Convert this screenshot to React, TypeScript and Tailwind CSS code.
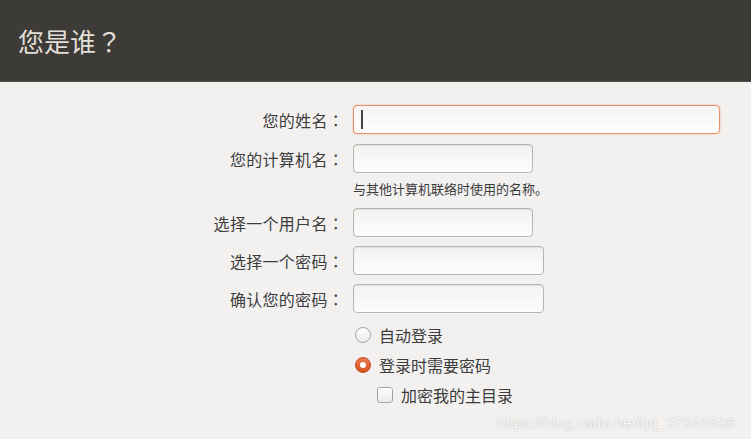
const font = "font-['Noto_Sans_CJK_SC','Noto_Sans',sans-serif]"

// full-width colon drawn centered, as in the reference
function Colon() {
  return <span className="font-['Noto_Sans_CJK_TC',sans-serif]">：</span>
}

function Field({ label, width, focused }: { label: string; width: string; focused?: boolean }) {
  return (
    <div className="flex items-center h-[29px]">
      <div className="w-[344px] text-right text-[16px] text-[#3c3c3c] leading-none tracking-[0.3px]">
        {label}
        <Colon />
      </div>
      <div
        className={
          focused
            ? `ml-[9px] ${width} h-[29px] rounded-[4px] border border-[#ec8e6c] bg-gradient-to-b from-[#f4f4f3] to-white shadow-[0_0_2px_rgba(236,120,80,0.6)] flex items-center pl-[7px]`
            : `ml-[9px] ${width} h-[29px] rounded-[4px] border border-[#b9b5b0] bg-gradient-to-b from-[#f3f2f1] to-[#fdfdfd] shadow-[inset_0_1px_1px_rgba(0,0,0,0.08)]`
        }
      >
        {focused && <div className="w-[1.5px] h-[19px] bg-[#444]"></div>}
      </div>
    </div>
  )
}

export default function App() {
  return (
    <div className={`relative w-[751px] h-[439px] bg-[#f2f1f0] overflow-hidden ${font}`}>
      <header className="h-[82px] bg-[#3c3b37] border-b border-[#55534e] flex items-center pl-[18px]">
        <h1 className="text-[26px] text-[#e2ded6] leading-none">
          您是谁<span className="font-['Noto_Sans_CJK_TC',sans-serif]">？</span>
        </h1>
      </header>

      <div className="pt-[23px] flex flex-col">
        <Field label="您的姓名" width="w-[367px]" focused />
        <div className="mt-[10px]">
          <Field label="您的计算机名" width="w-[180px]" />
        </div>
        <div className="ml-[353px] mt-[9px] text-[13px] text-[#3c3c3c] leading-none">
          与其他计算机联络时使用的名称。
        </div>
        <div className="mt-[13px]">
          <Field label="选择一个用户名" width="w-[180px]" />
        </div>
        <div className="mt-[9px]">
          <Field label="选择一个密码" width="w-[191px]" />
        </div>
        <div className="mt-[9px]">
          <Field label="确认您的密码" width="w-[191px]" />
        </div>

        <div className="ml-[355px] mt-[14px] flex flex-col gap-[14px] text-[16px] text-[#3c3c3c]">
          <label className="flex items-center gap-[8px] h-[16px]">
            <span className="w-[16px] h-[16px] rounded-full border border-[#a7a39e] bg-gradient-to-b from-white to-[#ecebea]"></span>
            <span className="leading-none">自动登录</span>
          </label>
          <label className="flex items-center gap-[8px] h-[16px]">
            <span className="w-[16px] h-[16px] rounded-full border border-[#b84a1e] bg-gradient-to-b from-[#ee7a4a] to-[#d5511f] flex items-center justify-center">
              <span className="w-[6px] h-[6px] rounded-full bg-white"></span>
            </span>
            <span className="leading-none">登录时需要密码</span>
          </label>
          <label className="ml-[22px] flex items-center gap-[8px] h-[16px]">
            <span className="w-[16px] h-[16px] rounded-[3px] border border-[#a7a39e] bg-gradient-to-b from-white to-[#ecebea]"></span>
            <span className="leading-none">加密我的主目录</span>
          </label>
        </div>
      </div>

      <div className="absolute left-[497px] top-[411px] text-[15.5px] font-['Liberation_Sans',sans-serif] text-white/90 [text-shadow:0_0_1.5px_rgba(0,0,0,0.3)]">
        https://blog.csdn.net/qq_37941538
      </div>
    </div>
  )
}
